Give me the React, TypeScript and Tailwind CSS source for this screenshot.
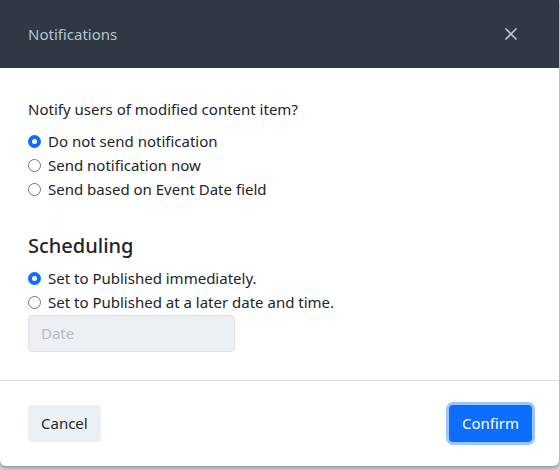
import React from "react";

function Radio({ checked, label }: { checked?: boolean; label: string }) {
  return (
    <label className="flex items-center h-6 gap-[7px]">
      {checked ? (
        <span className="w-[13px] h-[13px] rounded-full bg-[#0d6efd] flex items-center justify-center">
          <span className="w-[5px] h-[5px] rounded-full bg-white" />
        </span>
      ) : (
        <span className="w-[13px] h-[13px] rounded-full border border-[#767676] bg-white" />
      )}
      <span>{label}</span>
    </label>
  );
}

export default function App() {
  return (
    <div
      className="w-[560px] h-[470px] bg-[#cfcfcf] text-[#212529] text-[15px]"
      style={{ fontFamily: '"Noto Sans", "Open Sans", sans-serif' }}
    >
      <div className="w-[559px] h-[466px] bg-white rounded-b-md flex flex-col shadow-[0_2px_3px_rgba(0,0,0,0.25)]">
        <div className="h-[68px] bg-[#2f3843] flex items-center justify-between pl-7 pr-[42px]">
          <span className="text-[#b4c6d4] text-[15px]">Notifications</span>
          <svg width="12" height="12" viewBox="0 0 12 12" className="text-[#b4c6d4]">
            <path d="M1 1 L11 11 M11 1 L1 11" stroke="currentColor" strokeWidth="1.7" strokeLinecap="round" />
          </svg>
        </div>
        <div className="px-7 pt-[30px] h-[312px]">
          <div className="mb-[9px]">Notify users of modified content item?</div>
          <div>
            <Radio checked label="Do not send notification" />
            <Radio label="Send notification now" />
            <Radio label="Send based on Event Date field" />
          </div>
          <div className="text-[20px] font-medium mt-[32px] mb-[9px] leading-6">Scheduling</div>
          <div>
            <Radio checked label="Set to Published immediately." />
            <Radio label="Set to Published at a later date and time." />
          </div>
          <div className="w-[207px] h-[37px] bg-[#ecf0f4] border border-[#dee2e6] rounded-[4px] flex items-center px-3 text-[#b5bcc4]">
            Date
          </div>
        </div>
        <div className="border-t border-[#dee2e6] flex-1 flex items-center justify-between pl-7 pr-[27px]">
          <button className="h-[37px] px-[13px] bg-[#ecf0f4] rounded-[4px] text-[#212529] text-[15px]">Cancel</button>
          <button className="h-[37px] px-[13px] bg-[#0d6efd] rounded-[4px] text-white text-[15px] ring-[3px] ring-[#9ec5fe]">Confirm</button>
        </div>
      </div>
    </div>
  );
}
